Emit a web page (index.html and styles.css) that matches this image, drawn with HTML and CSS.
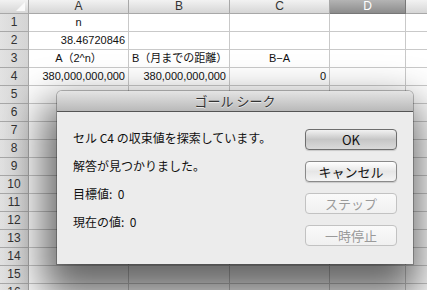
FILE: index.html
```html
<!DOCTYPE html>
<html lang="ja">

<head>
    <meta charset="UTF-8">
    <meta name="viewport" content="width=device-width, initial-scale=1.0">
    <title>ゴール シーク</title>
    <link rel="stylesheet" href="styles.css">
</head>

<body>
    <div class="sheet">
        <!-- 列見出し -->
        <div class="grid">
            <div class="hd corner"><span class="corner-mark"></span></div>
            <div class="hd">A</div>
            <div class="hd">B</div>
            <div class="hd">C</div>
            <div class="hd selected">D</div>
            <div class="hd"></div>

            <div class="rh">1</div>
            <div class="cell center">n</div>
            <div class="cell"></div>
            <div class="cell"></div>
            <div class="cell"></div>
            <div class="cell"></div>

            <div class="rh">2</div>
            <div class="cell right">38.46720846</div>
            <div class="cell"></div>
            <div class="cell"></div>
            <div class="cell"></div>
            <div class="cell"></div>

            <div class="rh">3</div>
            <div class="cell center">A（2^n）</div>
            <div class="cell center">B（月までの距離）</div>
            <div class="cell center">B−A</div>
            <div class="cell"></div>
            <div class="cell"></div>

            <div class="rh">4</div>
            <div class="cell right">380,000,000,000</div>
            <div class="cell right">380,000,000,000</div>
            <div class="cell right">0</div>
            <div class="cell"></div>
            <div class="cell"></div>
        </div>
        <div class="grid" id="emptyRows"></div>
    </div>

    <!-- ゴール シーク ダイアログ -->
    <div class="dialog">
        <div class="dialog-title">ゴール シーク</div>
        <div class="dialog-body">
            <div class="messages">
                <p>セル C4 の収束値を探索しています。</p>
                <p>解答が見つかりました。</p>
                <p>目標値:&nbsp;&nbsp;0</p>
                <p>現在の値:&nbsp;&nbsp;0</p>
            </div>
            <div class="buttons">
                <button class="btn default">OK</button>
                <button class="btn">キャンセル</button>
                <button class="btn" disabled>ステップ</button>
                <button class="btn" disabled>一時停止</button>
            </div>
        </div>
    </div>

    <script>
        // 5行目以降の空行を作る
        const rows = document.getElementById('emptyRows');
        for (let r = 5; r <= 16; r++) {
            const head = document.createElement('div');
            head.className = 'rh';
            head.textContent = r;
            rows.appendChild(head);
            for (let c = 0; c < 5; c++) {
                const cell = document.createElement('div');
                cell.className = 'cell';
                rows.appendChild(cell);
            }
        }
    </script>
</body>

</html>
```

FILE: styles.css
```css
/* 全体 */
body {
    margin: 0;
    padding: 0;
    background-color: #ffffff;
    font-family: "Liberation Sans", "Noto Sans CJK JP", sans-serif;
    overflow: hidden;
    width: 427px;
    height: 290px;
    position: relative;
}

/* シート */
.grid {
    display: grid;
    grid-template-columns: 29px 100px 101px 100px 76px 40px;
    grid-auto-rows: 18px;
}

.grid:first-child {
    grid-template-rows: 14px;
}

.hd,
.rh,
.cell {
    box-sizing: border-box;
    border-right: 1px solid #c9c9c9;
    border-bottom: 1px solid #c9c9c9;
    font-size: 11px;
    color: #111;
    white-space: nowrap;
    overflow: hidden;
}

/* 列見出し */
.hd {
    background: linear-gradient(#f2f2f2, #d6d6d6);
    border-color: #a8a8a8;
    text-align: center;
    line-height: 13px;
    font-size: 12px;
    color: #333;
}

.hd.selected {
    background: linear-gradient(#b4b4b4, #8c8c8c);
    color: #fff;
    border-color: #777;
}

.corner {
    position: relative;
}

.corner-mark {
    position: absolute;
    right: 3px;
    bottom: 2px;
    width: 0;
    height: 0;
    border-left: 9px solid transparent;
    border-bottom: 9px solid #fafafa;
}

/* 行見出し */
.rh {
    background: linear-gradient(90deg, #e2e2e2, #d4d4d4);
    border-color: #a8a8a8;
    text-align: center;
    line-height: 17px;
    font-size: 12px;
    color: #333;
}

/* セル */
.cell {
    line-height: 17px;
    padding: 0 3px;
}

.center {
    text-align: center;
}

.right {
    text-align: right;
}

/* ダイアログ */
.dialog {
    position: absolute;
    left: 57px;
    top: 91px;
    width: 356px;
    height: 173px;
    background-color: #ececec;
    border-radius: 5px 5px 0 0;
    box-shadow: 0 0 0 1px rgba(0, 0, 0, 0.25), -4px 22px 40px 10px rgba(0, 0, 0, 0.6);
    font-family: "Noto Sans CJK JP", sans-serif;
    overflow: hidden;
}

.dialog-title {
    height: 20px;
    background: linear-gradient(#e4e4e4, #b9b9b9);
    border-bottom: 1px solid #555;
    text-align: center;
    font-size: 13px;
    line-height: 20px;
    color: #333;
    text-shadow: 0 1px 0 rgba(255, 255, 255, 0.6);
}

.dialog-body {
    display: flex;
    justify-content: space-between;
    padding: 17px 16px 0 16px;
}

.messages p {
    margin: 0 0 10px 0;
    font-size: 12px;
    line-height: 18px;
    color: #111;
}

.buttons {
    display: flex;
    flex-direction: column;
    gap: 11px;
}

.btn {
    width: 92px;
    height: 21px;
    padding: 0;
    border: 1px solid #8a8a8a;
    border-radius: 4px;
    background: linear-gradient(#ffffff, #e6e6e6 50%, #f4f4f4);
    font-family: "Noto Sans CJK JP", sans-serif;
    font-size: 13px;
    line-height: 19px;
    color: #111;
    box-shadow: 0 1px 1px rgba(0, 0, 0, 0.15);
}

.btn.default {
    background: linear-gradient(#f2f2f2, #c6c6c6 50%, #dadada);
    border-color: #6e6e6e;
}

.btn:disabled {
    border-color: #c2c2c2;
    color: #9a9a9a;
    background: linear-gradient(#fafafa, #f0f0f0);
    box-shadow: none;
}
```
